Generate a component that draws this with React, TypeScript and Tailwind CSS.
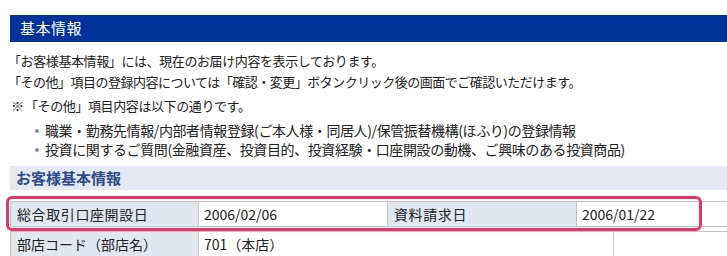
import React from "react";

function Bullet({ children }: { children: React.ReactNode }) {
  return (
    <div className="flex items-center h-[19px]">
      <span className="w-[45px] shrink-0 flex justify-end pr-[6px]">
        <span className="block w-[4px] h-[4px] rounded-full bg-[#6f8fc0]" />
      </span>
      <span className="text-[14px] tracking-[-0.4px] whitespace-nowrap">{children}</span>
    </div>
  );
}

export default function App() {
  return (
    <div className="relative w-[727px] h-[256px] overflow-hidden bg-white text-[#222] font-['Noto_Sans_CJK_JP','Noto_Sans',sans-serif]">
      <div className="pt-[15px] pl-[10px]">
        <div className="h-[27px] bg-[#003399] text-white text-[15px] tracking-[0.5px] pl-[10px] flex items-center">
          基本情報
        </div>
      </div>

      <div className="pl-[8px] pt-[8px] text-[13px] tracking-[-0.4px]">
        <p className="leading-[21px]">「お客様基本情報」には、現在のお届け内容を表示しております。</p>
        <p className="leading-[21px] tracking-[-0.5px]">「その他」項目の登録内容については「確認・変更」ボタンクリック後の画面でご確認いただけます。</p>
        <div className="mt-[3px] leading-[21px] flex">
          <span className="pl-[3px] w-[17px]">※</span>
          <span>「その他」項目内容は以下の通りです。</span>
        </div>
      </div>
      <div className="mt-[5px]">
        <Bullet>職業・勤務先情報/内部者情報登録(ご本人様・同居人)/保管振替機構(ほふり)の登録情報</Bullet>
        <Bullet>投資に関するご質問(金融資産、投資目的、投資経験・口座開設の動機、ご興味のある投資商品)</Bullet>
      </div>

      <div className="pl-[10px] mt-[7px]">
        <div className="h-[24px] bg-[#e5e9f3] flex items-center pl-[6px] text-[15px] font-bold text-[#2f4c88]">
          お客様基本情報
        </div>
      </div>

      <div className="pl-[10px] mt-[11px] text-[14px] text-[#222]">
        <div className="grid grid-cols-[188px_189px_189px_1fr] h-[26px] border-y border-[#c4c4c4]">
          <div className="bg-[#dfe8f0] flex items-center pl-[6px] tracking-[0.6px] border-l border-[#c4c4c4]">総合取引口座開設日</div>
          <div className="flex items-center pl-[5px] border-l border-[#c4c4c4]">2006/02/06</div>
          <div className="bg-[#dfe8f0] flex items-center pl-[6px] tracking-[0.6px] border-l border-[#c4c4c4]">資料請求日</div>
          <div className="flex items-center pl-[5px] border-l border-[#c4c4c4]">2006/01/22</div>
        </div>
        <div className="mt-[4px] grid grid-cols-[188px_415px_1fr] h-[26px] border-t border-[#c4c4c4]">
          <div className="bg-[#dfe8f0] flex items-center pl-[6px] border-l border-[#c4c4c4]">部店コード（部店名）</div>
          <div className="flex items-center pl-[5px] border-l border-[#c4c4c4]">701（本店）</div>
          <div className="border-l border-[#c4c4c4]" />
        </div>
      </div>

      <div className="absolute left-[6px] top-[196px] w-[696px] h-[35px] border-[3px] border-[#e8336b] rounded-[6px] pointer-events-none" />
    </div>
  );
}
